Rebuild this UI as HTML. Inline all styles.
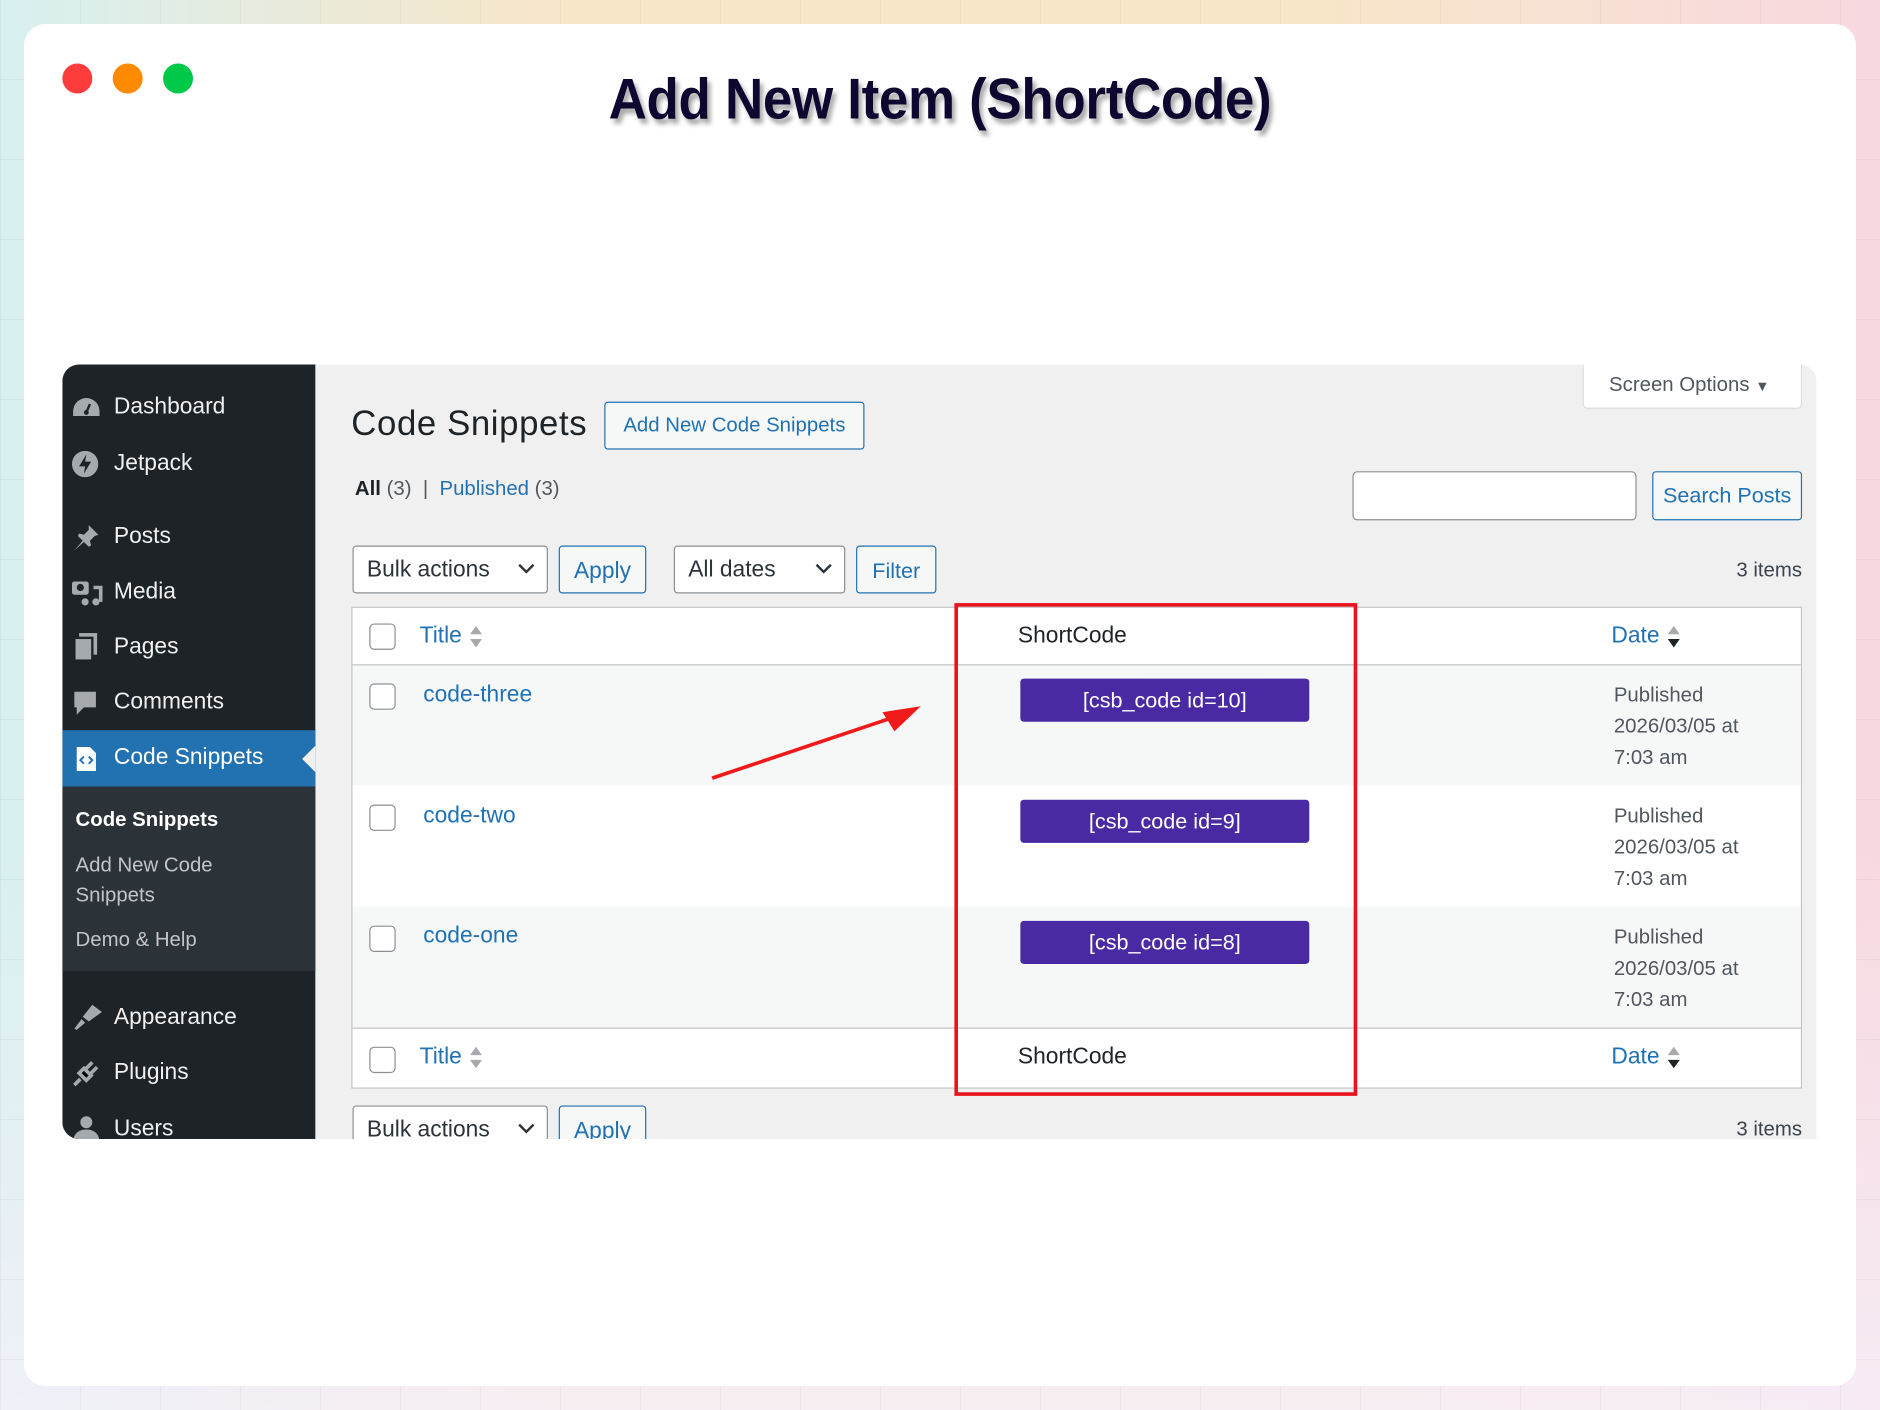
<!DOCTYPE html>
<html><head><meta charset="utf-8">
<style>
*{margin:0;padding:0;box-sizing:border-box}
html,body{width:1880px;height:1410px;overflow:hidden}
body{background:#f8e8d4;font-family:"Liberation Sans",sans-serif}
#bg{position:absolute;left:0;top:0;width:1880px;height:1410px;
background:linear-gradient(180deg,rgba(255,255,255,0) 0%,rgba(255,255,255,0) 60%,rgba(245,240,250,.8) 100%),
linear-gradient(90deg,#d7f0f0 0%,rgba(220,240,240,0) 30%,rgba(250,220,225,0) 70%,#f8d8e0 100%),
linear-gradient(180deg,#f8e6c8,#fbe3cf);}
#grid{position:absolute;left:0;top:0;width:1880px;height:1410px;
background-image:linear-gradient(90deg,rgba(0,0,0,.04) 1px,transparent 1px),linear-gradient(0deg,rgba(0,0,0,.04) 1px,transparent 1px);background-size:80px 80px}
#s{position:absolute;left:0;top:0;width:1568px;height:1176px;transform:scale(1.19898);transform-origin:0 0}
.card{position:absolute;left:20px;top:20px;width:1528px;height:1136px;background:#fff;border-radius:18px}
.dot{position:absolute;top:53px;width:25px;height:25px;border-radius:50%}
h1{position:absolute;left:0;width:1568px;top:56px;text-align:center;font:bold 48px "Liberation Sans",sans-serif;color:#0e0830;text-shadow:3px 4px 4px rgba(0,0,0,.35);transform:scaleX(.92);letter-spacing:-0.3px}
.wp{position:absolute;left:52px;top:304px;width:1463px;height:646px;background:#f0f0f1;border-radius:14px 14px 0 14px;overflow:hidden;color:#1d2327;font-size:18px}
.side{position:absolute;left:0;top:0;width:211px;height:646px;background:#1d2327}
.mi{position:absolute;left:43px;color:#f0f0f1;font-size:19px;line-height:24px}
.ic{position:absolute;left:8px}
.abs{position:absolute}
.btn{position:absolute;border:1px solid #2271b1;border-radius:3px;color:#2271b1;background:#f6f7f7;font-size:18px;text-align:center}
.sel{position:absolute;border:1px solid #8c8f94;border-radius:3px;background:#fff;font-size:19px;color:#2c3338;padding-left:11px}
.sel svg{position:absolute;right:10px;top:14px}
.cb{position:absolute;width:22px;height:22px;border:1px solid #8c8f94;border-radius:4px;background:#fff}
.sc{position:absolute;width:241px;height:36px;background:#4a2aa2;border-radius:3px;color:#fff;font-size:18px;text-align:center;line-height:36px}
.blue{color:#2271b1}
.pub{position:absolute;left:1294px;font-size:17px;color:#50575e;line-height:26px}
.sort{display:inline-block;vertical-align:middle;margin-left:6px}
</style></head><body>
<div id="bg"></div><div id="grid"></div>
<div id="s">
<div class="card"></div>
<div class="dot" style="left:52px;background:#fe3c3c"></div>
<div class="dot" style="left:94px;background:#fe8a00"></div>
<div class="dot" style="left:136px;background:#00c94a"></div>
<h1>Add New Item (ShortCode)</h1>

<div class="wp">
 <div class="side">
  <svg class="ic" style="top:26px" width="24" height="20"><path d="M12 2a11 11 0 0 0-11 11v4h22v-4A11 11 0 0 0 12 2z" fill="#a7aaad"/><circle cx="12" cy="14" r="2" fill="#1d2327"/><path d="M12 14l3-7" stroke="#1d2327" stroke-width="2"/></svg>
  <div class="mi" style="top:24px">Dashboard</div>
  <svg class="ic" style="top:72px" width="22" height="22"><circle cx="11" cy="11" r="11" fill="#a7aaad"/><path d="M12 3l-6 10h5l-1 6 6-10h-5z" fill="#1d2327"/></svg>
  <div class="mi" style="top:71px">Jetpack</div>
  <svg class="ic" style="top:132px" width="24" height="24"><path d="M14 2l8 8-3 1-4 4 1 4-2 1-4-4-8 7 7-8-4-4 1-2 4 1 4-4z" fill="#a7aaad"/></svg>
  <div class="mi" style="top:132px">Posts</div>
  <svg class="ic" style="top:178px" width="26" height="24"><rect x="0" y="3" width="14" height="11" rx="2" fill="#a7aaad"/><circle cx="7" cy="8" r="3" fill="#1d2327"/><path d="M18 8h6v12" stroke="#a7aaad" stroke-width="3" fill="none"/><circle cx="20" cy="20" r="3" fill="#a7aaad"/><circle cx="11" cy="20" r="3" fill="#a7aaad"/></svg>
  <div class="mi" style="top:178px">Media</div>
  <svg class="ic" style="top:224px" width="22" height="24"><rect x="6" y="0" width="15" height="18" fill="#a7aaad"/><rect x="2" y="4" width="15" height="19" fill="#a7aaad" stroke="#1d2327" stroke-width="2"/></svg>
  <div class="mi" style="top:224px">Pages</div>
  <svg class="ic" style="top:271px" width="22" height="24"><path d="M2 2h18v13H10l-6 6v-6H2z" fill="#a7aaad"/></svg>
  <div class="mi" style="top:270px">Comments</div>
  <div class="abs" style="left:0;top:305px;width:211px;height:47px;background:#2271b1"></div>
  <div class="abs" style="left:200px;top:318px;width:0;height:0;border-top:11px solid transparent;border-bottom:11px solid transparent;border-right:11px solid #f0f0f1"></div>
  <svg class="ic" style="top:318px;left:11px" width="18" height="22"><path d="M1 1h11l5 5v15H1z" fill="#fff"/><path d="M7 9l-3 3 3 3M11 9l3 3-3 3" stroke="#2271b1" stroke-width="1.6" fill="none"/></svg>
  <div class="mi" style="top:316px;color:#fff">Code Snippets</div>
  <div class="abs" style="left:0;top:352px;width:211px;height:154px;background:#2c3338"></div>
  <div class="mi" style="left:11px;top:368px;font-weight:bold;font-size:17px;color:#fff">Code Snippets</div>
  <div class="mi" style="left:11px;top:405px;font-size:17px;color:#c3c4c7;line-height:25px">Add New Code<br>Snippets</div>
  <div class="mi" style="left:11px;top:468px;font-size:17px;color:#c3c4c7">Demo &amp; Help</div>
  <svg class="ic" style="top:532px" width="26" height="24"><path d="M2 22l6-8 3 3-7 6zM9 12l8-10 8 6-11 8z" fill="#a7aaad"/></svg>
  <div class="mi" style="top:533px">Appearance</div>
  <svg class="ic" style="top:579px" width="24" height="24"><path d="M2 22l5-5M6 12l6 6 4-4-6-6zM12 8l5-5M16 12l5-5" stroke="#a7aaad" stroke-width="3"/></svg>
  <div class="mi" style="top:579px">Plugins</div>
  <svg class="ic" style="top:625px" width="24" height="24"><circle cx="12" cy="7" r="5" fill="#a7aaad"/><path d="M1 24c0-8 5-11 11-11s11 3 11 11z" fill="#a7aaad"/></svg>
  <div class="mi" style="top:626px">Users</div>
 </div>

 <div class="abs" style="left:1268px;top:-1px;width:183px;height:38px;background:#fff;border:1px solid #dcdcde;border-top:none;border-radius:0 0 4px 4px;color:#50575e;font-size:17px;padding:8px 0 0 21px">Screen Options <span style="font-size:12px">▼</span></div>
 <div class="abs" style="left:241px;top:34px;font-size:29px;color:#1d2327;letter-spacing:0.5px">Code Snippets</div>
 <div class="btn" style="left:452px;top:31px;width:217px;height:40px;line-height:38px;font-size:17px">Add New Code Snippets</div>
 <div class="abs" style="left:244px;top:94px;font-size:17px;color:#50575e"><b style="color:#1d2327">All</b> (3) &nbsp;| &nbsp;<span class="blue">Published</span> (3)</div>
 <div class="abs" style="left:1076px;top:89px;width:237px;height:41px;background:#fff;border:1px solid #8c8f94;border-radius:4px"></div>
 <div class="btn" style="left:1326px;top:89px;width:125px;height:41px;line-height:39px">Search Posts</div>

 <div class="sel" style="left:242px;top:151px;width:163px;height:40px;line-height:40px">Bulk actions<svg width="14" height="9"><path d="M1 1l6 6 6-6" stroke="#2c3338" stroke-width="2" fill="none"/></svg></div>
 <div class="btn" style="left:414px;top:151px;width:73px;height:40px;line-height:42px;font-size:19px">Apply</div>
 <div class="sel" style="left:510px;top:151px;width:143px;height:40px;line-height:40px">All dates<svg width="14" height="9"><path d="M1 1l6 6 6-6" stroke="#2c3338" stroke-width="2" fill="none"/></svg></div>
 <div class="btn" style="left:662px;top:151px;width:67px;height:40px;line-height:40px">Filter</div>
 <div class="abs" style="right:12px;top:162px;font-size:17px;color:#3c434a">3 items</div>

 <div class="abs" style="left:241px;top:202px;width:1210px;height:402px;background:#fff;border:1px solid #c3c4c7"></div>
 <div class="abs" style="left:242px;top:250px;width:1208px;height:101px;background:#f6f7f7;border-top:1px solid #c3c4c7"></div>
 <div class="abs" style="left:242px;top:452px;width:1208px;height:101px;background:#f6f7f7"></div>
 <div class="abs" style="left:242px;top:553px;width:1208px;height:1px;background:#c3c4c7"></div>

 <div class="cb" style="left:256px;top:216px"></div>
 <div class="abs blue" style="left:298px;top:216px;font-size:19px">Title<svg class="sort" width="12" height="20"><path d="M6 1l5 7H1z" fill="#a7aaad"/><path d="M6 19l5-7H1z" fill="#a7aaad"/></svg></div>
 <div class="abs" style="left:797px;top:216px;font-size:19px">ShortCode</div>
 <div class="abs blue" style="left:1292px;top:216px;font-size:19px">Date<svg class="sort" width="12" height="20"><path d="M6 1l5 7H1z" fill="#a7aaad"/><path d="M6 19l5-7H1z" fill="#1d2327"/></svg></div>

 <div class="cb" style="left:256px;top:266px"></div>
 <div class="abs blue" style="left:301px;top:265px;font-size:19px">code-three</div>
 <div class="sc" style="left:799px;top:262px">[csb_code id=10]</div>
 <div class="pub" style="top:263px">Published<br>2026/03/05 at<br>7:03 am</div>

 <div class="cb" style="left:256px;top:367px"></div>
 <div class="abs blue" style="left:301px;top:366px;font-size:19px">code-two</div>
 <div class="sc" style="left:799px;top:363px">[csb_code id=9]</div>
 <div class="pub" style="top:364px">Published<br>2026/03/05 at<br>7:03 am</div>

 <div class="cb" style="left:256px;top:468px"></div>
 <div class="abs blue" style="left:301px;top:466px;font-size:19px">code-one</div>
 <div class="sc" style="left:799px;top:464px">[csb_code id=8]</div>
 <div class="pub" style="top:465px">Published<br>2026/03/05 at<br>7:03 am</div>

 <div class="cb" style="left:256px;top:569px"></div>
 <div class="abs blue" style="left:298px;top:567px;font-size:19px">Title<svg class="sort" width="12" height="20"><path d="M6 1l5 7H1z" fill="#a7aaad"/><path d="M6 19l5-7H1z" fill="#a7aaad"/></svg></div>
 <div class="abs" style="left:797px;top:567px;font-size:19px">ShortCode</div>
 <div class="abs blue" style="left:1292px;top:567px;font-size:19px">Date<svg class="sort" width="12" height="20"><path d="M6 1l5 7H1z" fill="#a7aaad"/><path d="M6 19l5-7H1z" fill="#1d2327"/></svg></div>

 <div class="sel" style="left:242px;top:618px;width:163px;height:40px;line-height:40px">Bulk actions<svg width="14" height="9"><path d="M1 1l6 6 6-6" stroke="#2c3338" stroke-width="2" fill="none"/></svg></div>
 <div class="btn" style="left:414px;top:618px;width:73px;height:40px;line-height:42px;font-size:19px">Apply</div>
 <div class="abs" style="right:12px;top:628px;font-size:17px;color:#3c434a">3 items</div>

 <div class="abs" style="left:744px;top:199px;width:336px;height:411px;border:3px solid #e8131b"></div>
 <svg class="abs" style="left:0;top:0" width="1463" height="646"><path d="M542 345L700 292" stroke="#f01a1a" stroke-width="3"/><path d="M716 285L684 290L694 306z" fill="#f01a1a"/></svg>
</div>
</div>
</body></html>
